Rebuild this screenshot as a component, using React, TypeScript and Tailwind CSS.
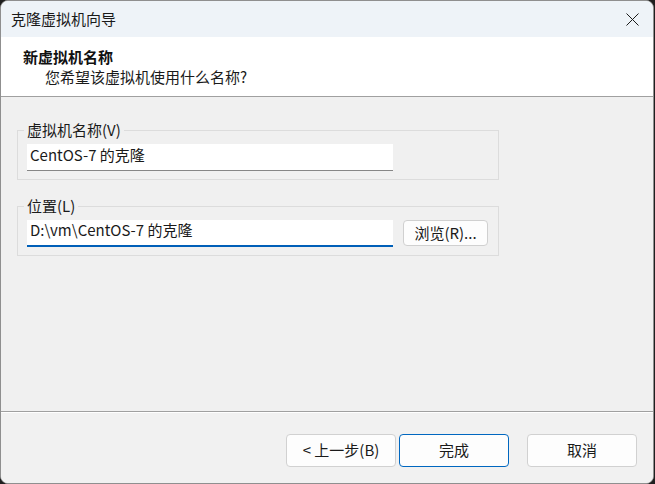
const FONT = { fontFamily: '"Noto Sans CJK SC", "Noto Sans", sans-serif' }

function GroupBox({ label, children }: { label: string; children: React.ReactNode }) {
  return (
    <fieldset className="ml-[16px] w-[482px] border border-[#dcdcdc] pl-[9px] pr-2 pb-[8px]">
      <legend className="-ml-[3px] px-[3px] text-[15px] leading-5 text-[#1a1a1a]">{label}</legend>
      <div className="mt-[4px] flex items-start gap-[10px]">{children}</div>
    </fieldset>
  )
}

function Btn({ children, primary }: { children: React.ReactNode; primary?: boolean }) {
  return (
    <button
      className={`h-[33px] w-[110px] rounded-[4px] border bg-[#fdfdfd] text-[15px] text-[#1a1a1a] ${
        primary ? 'border-[#0067c0]' : 'border-[#d1d1d1]'
      }`}>
      {children}
    </button>
  )
}

export default function App() {
  return (
    <div style={FONT} className="h-[484px] w-[655px] bg-[#1f1f1f]">
      <div className="flex h-[484px] w-[654px] flex-col overflow-hidden rounded-[8px] border border-[#8f8f8f] bg-[#f0f0f0]">
        <div className="flex h-[36px] shrink-0 items-center justify-between bg-[#eef3f8] pl-[10px] pr-[14px]">
          <span className="text-[15px] leading-5 text-[#1a1a1a]">克隆虚拟机向导</span>
          <svg width="13" height="13" viewBox="0 0 13 13">
            <path d="M0.5 0.5 L12.5 12.5 M12.5 0.5 L0.5 12.5" stroke="#1a1a1a" strokeWidth="1" />
          </svg>
        </div>

        <div className="h-[60px] shrink-0 border-b border-[#a0a0a0] bg-white pl-[22px] pt-[10px]">
          <p className="text-[15px] font-bold leading-5 text-[#111]">新虚拟机名称</p>
          <p className="pl-[22px] text-[15px] leading-5 text-[#1a1a1a]">您希望该虚拟机使用什么名称?</p>
        </div>

        <div className="flex flex-1 flex-col gap-[16px] border-b border-[#a0a0a0] pt-[23px]">
          <GroupBox label="虚拟机名称(V)">
            <div className="h-[27px] w-[366px] border-b border-[#868686] bg-white pl-[3px] pt-[1px] text-[15px] leading-5 text-[#1a1a1a]">
              CentOS-7 的克隆
            </div>
          </GroupBox>
          <GroupBox label="位置(L)">
            <div className="h-[27px] w-[366px] border-b-2 border-[#005fb8] bg-white pl-[3px] text-[15px] leading-5 text-[#1a1a1a]">
              D:\vm\CentOS-7 的克隆
            </div>
            <button className="h-[26px] w-[85px] rounded-[4px] border border-[#d0d0d0] bg-[#fdfdfd] text-[15px] leading-5 text-[#1a1a1a]">
              浏览(R)...
            </button>
          </GroupBox>
        </div>

        <div className="flex h-[71px] shrink-0 items-start justify-end border-t border-white bg-[#f1f1f1] pr-[16px] pt-[21px]">
          <div className="flex gap-[3px]">
            <Btn>&lt; 上一步(B)</Btn>
            <Btn primary>完成</Btn>
          </div>
          <div className="ml-[18px]">
            <Btn>取消</Btn>
          </div>
        </div>
      </div>
    </div>
  )
}
